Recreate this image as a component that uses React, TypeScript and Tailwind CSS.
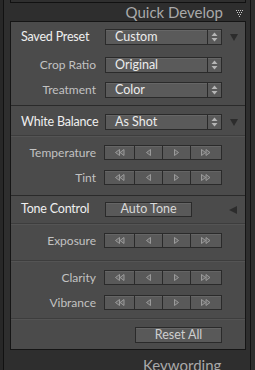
import type React from "react";

const Updown = () => (
	<svg width="7" height="10" viewBox="0 0 7 10">
		<polygon points="0.5,4 3.5,0.5 6.5,4" fill="#b5b5b5" />
		<polygon points="0.5,6 3.5,9.5 6.5,6" fill="#b5b5b5" />
	</svg>
);

const Dropdown = ({ value }: { value: string }) => (
	<div className="flex h-[16px] w-[117px] border border-[#2a2a2a] bg-[#5a5a5a] shadow-[inset_0_1px_0_#666]">
		<span className="flex-1 pl-[9px] text-[12.5px] leading-[14px] text-[#ececec]">
			{value}
		</span>
		<div className="flex w-[14px] items-center justify-center border-l border-[#2a2a2a]">
			<Updown />
		</div>
	</div>
);

const Tri = ({ dir, double }: { dir: "l" | "r"; double?: boolean }) => {
	const one = dir === "l" ? "4.5,0.5 0.5,3.5 4.5,6.5" : "0.5,0.5 4.5,3.5 0.5,6.5";
	const two = dir === "l" ? "9,0.5 5,3.5 9,6.5" : "5,0.5 9,3.5 5,6.5";
	return (
		<svg width={double ? 10 : 5} height="7" viewBox={double ? "0 0 10 7" : "0 0 5 7"}>
			<polygon points={one} fill="#666" stroke="#a0a0a0" strokeWidth="0.9" />
			{double && (
				<polygon points={two} fill="#666" stroke="#a0a0a0" strokeWidth="0.9" />
			)}
		</svg>
	);
};

const Stepper = () => (
	<div className="flex h-[15px] w-[118px] border border-[#2a2a2a] bg-[#595959] shadow-[inset_0_1px_0_#656565]">
		<div className="flex w-[30px] items-center justify-center border-r border-[#2a2a2a]">
			<Tri dir="l" double />
		</div>
		<div className="flex w-[28px] items-center justify-center border-r border-[#2a2a2a]">
			<Tri dir="l" />
		</div>
		<div className="flex w-[28px] items-center justify-center border-r border-[#2a2a2a]">
			<Tri dir="r" />
		</div>
		<div className="flex flex-1 items-center justify-center">
			<Tri dir="r" double />
		</div>
	</div>
);

const Label = ({ children }: { children: React.ReactNode }) => (
	<span className="w-[86px] pr-[1px] text-right text-[12px] leading-none text-[#c2c2c2]">
		{children}
	</span>
);

const Head = ({ children }: { children: React.ReactNode }) => (
	<span className="w-[94px] pl-[10px] text-[12.5px] leading-none tracking-[-0.2px] text-[#efefef]">
		{children}
	</span>
);

const DownArrow = () => (
	<svg width="8" height="7" viewBox="0 0 8 7" className="ml-[8px]">
		<polygon points="0,0 8,0 4,7" fill="#2c2c2c" />
	</svg>
);

const StepRow = ({ label, className = "" }: { label: string; className?: string }) => (
	<div className={`flex items-center ${className}`}>
		<Label>{label}</Label>
		<div className="ml-[7px]">
			<Stepper />
		</div>
	</div>
);

const SubSep = ({ className = "" }: { className?: string }) => (
	<div className={`h-[2px] border-t border-[#3d3d3d] border-b border-b-[#545454] ${className}`} />
);

const SectionSep = () => (
	<div className="h-px bg-[#2a2a2a]" />
);

const DottedTri = () => (
	<svg width="9" height="7" viewBox="0 0 9 7">
		{[
			[0.5, 0.5], [2.5, 0.5], [4.5, 0.5], [6.5, 0.5],
			[1.5, 2.5], [3.5, 2.5], [5.5, 2.5],
			[2.5, 4.5], [4.5, 4.5],
			[3.5, 6.5],
		].map(([x, y]) => (
			<rect key={`${x}-${y}`} x={x - 0.5} y={y - 0.5} width="1" height="1" fill="#c8c8c8" />
		))}
	</svg>
);

export default function App() {
	return (
		<div className="flex h-[370px] w-[255px] overflow-hidden bg-[#2e2e2e] font-['Lato',sans-serif]">
			<div className="w-[3px] bg-[#272727]" />
			<div className="w-px bg-[#111]" />
			<div className="flex w-[246px] flex-col">
				<div className="ml-[6px] h-[4px] w-[236px] border-x border-b border-[#111] bg-[#2f2f2f]" />
				<div className="flex h-[25px] items-center justify-end pr-[5px]">
					<span className="text-[15px] leading-none text-[#a9a9a9]">Quick Develop</span>
					<span className="ml-[13px] mt-[3px] flex">
						<DottedTri />
					</span>
				</div>
				<div className="ml-[6px] flex w-[236px] flex-col border border-[#151515] bg-[#4b4b4b]">
					{/* saved preset */}
					<div className="flex flex-col pt-[7px] pb-[7px]">
						<div className="flex items-center">
							<Head>Saved Preset</Head>
							<Dropdown value="Custom" />
							<DownArrow />
						</div>
						<div className="mt-[12px] flex items-center">
							<Label>Crop Ratio</Label>
							<div className="ml-[8px]">
								<Dropdown value="Original" />
							</div>
						</div>
						<div className="mt-[9px] flex items-center">
							<Label>Treatment</Label>
							<div className="ml-[8px]">
								<Dropdown value="Color" />
							</div>
						</div>
					</div>
					<SectionSep />
					{/* white balance */}
					<div className="flex flex-col pt-[8px]">
						<div className="flex items-center">
							<Head>White Balance</Head>
							<Dropdown value="As Shot" />
							<DownArrow />
						</div>
						<SubSep className="mt-[5px]" />
						<StepRow label="Temperature" className="mt-[8px]" />
						<StepRow label="Tint" className="mt-[10px]" />
						<div className="h-[10px]" />
					</div>
					<SectionSep />
					{/* tone */}
					<div className="flex flex-col pt-[6px] pb-[6px]">
						<div className="flex items-center">
							<Head>Tone Control</Head>
							<div className="flex h-[15px] w-[87px] items-center justify-center border border-[#2a2a2a] bg-[#595959] text-[12.5px] text-[#d8d8d8] shadow-[inset_0_1px_0_#656565]">
								Auto Tone
							</div>
							<svg width="8" height="8" viewBox="0 0 8 8" className="ml-[37px]">
								<polygon points="8,0 8,8 0,4" fill="#2c2c2c" />
							</svg>
						</div>
						<SubSep className="mt-[6px]" />
						<StepRow label="Exposure" className="mt-[8px]" />
						<SubSep className="mt-[12px]" />
						<StepRow label="Clarity" className="mt-[8px]" />
						<StepRow label="Vibrance" className="mt-[10px]" />
						<SubSep className="mt-[8px]" />
						<div className="mt-[7px] flex">
							<div className="ml-[124px] flex h-[16px] w-[87px] items-center justify-center border border-[#2a2a2a] bg-[#595959] text-[12.5px] text-[#cfcfcf] shadow-[inset_0_1px_0_#656565]">
								Reset All
							</div>
						</div>
					</div>
				</div>
				<div className="flex h-[20px] items-start pl-[139px] pt-[8px]">
					<span className="text-[15px] leading-none text-[#a9a9a9]">Keywording</span>
				</div>
			</div>
			<div className="w-px bg-[#111]" />
			<div className="w-[4px] bg-[#2e2e2e]" />
		</div>
	);
}
